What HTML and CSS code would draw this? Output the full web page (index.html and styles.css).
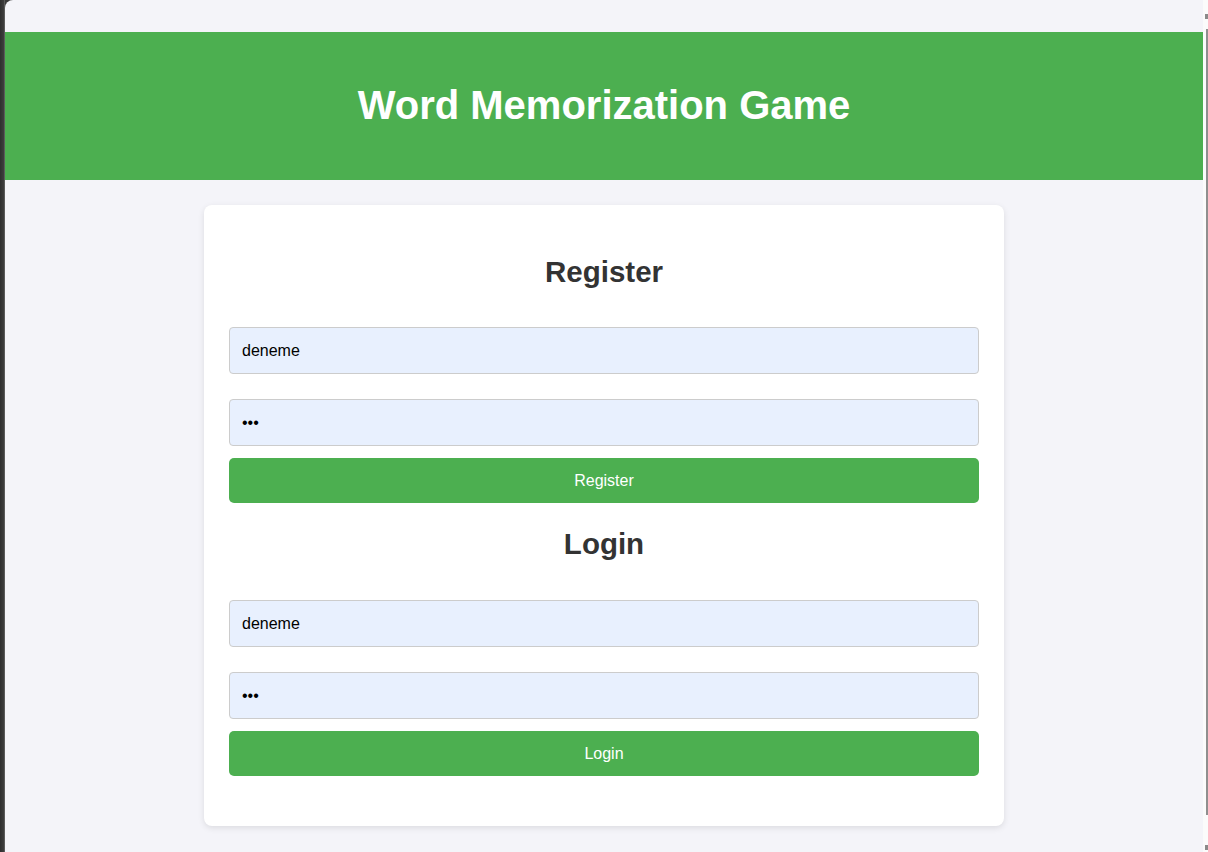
FILE: index.html
```html
<!DOCTYPE html>
<html lang="en">
<head>
<meta charset="utf-8">
<title>Word Memorization Game</title>
<link rel="stylesheet" href="styles.css">
</head>
<body>
<div class="frame">
  <div class="frame-edge"></div>
  <div class="window">
    <header class="app-header">
      <h1 class="app-title">Word Memorization Game</h1>
    </header>
    <main class="content">
      <section class="card">
        <h2 class="form-title">Register</h2>
        <input class="field" type="text" value="deneme">
        <input class="field field-last" type="password" value="123">
        <button class="btn" type="button">Register</button>
        <h2 class="form-title form-title-second">Login</h2>
        <input class="field" type="text" value="deneme">
        <input class="field field-last" type="password" value="123">
        <button class="btn" type="button">Login</button>
      </section>
    </main>
  </div>
  <div class="scrollbar">
    <div class="scroll-arrow"></div>
    <div class="scroll-thumb"></div>
    <div class="scroll-arrow scroll-arrow-bottom"></div>
  </div>
</div>
</body>
</html>
```
FILE: styles.css
```css
* { box-sizing: border-box; }

html, body {
  margin: 0;
  padding: 0;
  height: 100%;
  overflow: hidden;
}

body {
  font-family: "Liberation Sans", Arial, sans-serif;
  background: #3a3a3a;
}

.frame {
  display: flex;
  height: 852px;
  width: 1208px;
}

.frame-edge {
  width: 5px;
  flex: 0 0 5px;
  background: linear-gradient(to right, #2e2e2e, #3c3c3c 70%, #6a6a6a);
}

.window {
  flex: 1;
  background: #f4f4f9;
  border-top-left-radius: 8px;
  overflow: hidden;
  padding-top: 32px;
}

.app-header {
  background: #4caf50;
  padding: 50px 0 52px;
  text-align: center;
}

.app-title {
  margin: 0;
  color: #fff;
  font-size: 40px;
  line-height: 46px;
  font-weight: bold;
}

.content {
  display: flex;
  justify-content: center;
  padding-top: 25px;
}

.card {
  width: 800px;
  background: #fff;
  border-radius: 8px;
  box-shadow: 0 2px 6px rgba(0, 0, 0, 0.1);
  padding: 50px 25px 50px;
  display: flex;
  flex-direction: column;
}

.form-title {
  margin: 0 0 38px;
  text-align: center;
  color: #333;
  font-size: 29.5px;
  line-height: 34px;
  font-weight: bold;
}

.form-title-second {
  margin-top: 24px;
  margin-bottom: 39px;
}

.field {
  display: block;
  width: 100%;
  height: 47px;
  margin: 0 0 25px;
  padding: 0 12px;
  border: 1px solid #ccc;
  border-radius: 4px;
  background: #e8f0fe;
  font-family: "Liberation Sans", Arial, sans-serif;
  font-size: 16px;
  color: #000;
  outline: none;
}

.field-last {
  margin-bottom: 12px;
}

.btn {
  display: block;
  width: 100%;
  height: 45px;
  border: none;
  border-radius: 5px;
  background: #4caf50;
  color: #fff;
  font-family: "Liberation Sans", Arial, sans-serif;
  font-size: 16px;
  cursor: pointer;
}

.scrollbar {
  width: 5px;
  flex: 0 0 5px;
  background: #fbfbfb;
  display: flex;
  flex-direction: column;
  align-items: flex-end;
  padding: 14px 0 2px;
}

.scroll-arrow {
  width: 3px;
  height: 5px;
  background: #8a8a8a;
  margin-bottom: 10px;
}

.scroll-thumb {
  width: 2px;
  flex: 1;
  background: #8f8f8f;
  margin-bottom: 30px;
}

.scroll-arrow-bottom {
  margin-bottom: 0;
}
```
